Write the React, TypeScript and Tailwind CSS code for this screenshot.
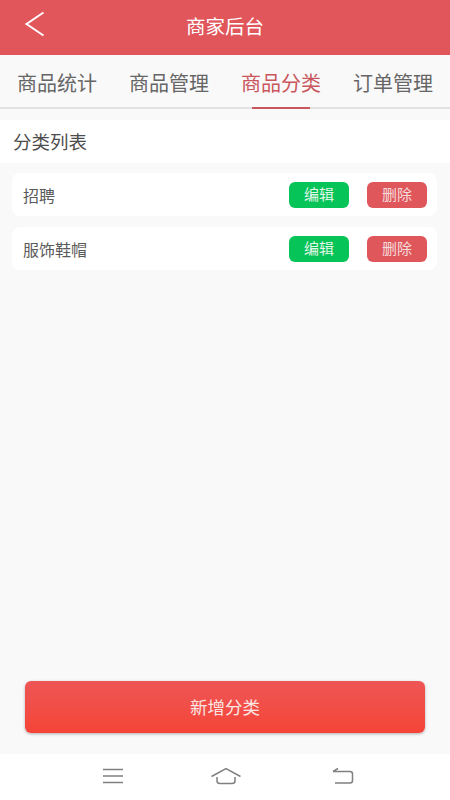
import React from 'react'

const font = { fontFamily: '"Noto Sans CJK SC", sans-serif' }

const tabs = [
	{ label: '商品统计', active: false },
	{ label: '商品管理', active: false },
	{ label: '商品分类', active: true },
	{ label: '订单管理', active: false }
]

const categories = ['招聘', '服饰鞋帽']

function CategoryRow({ name }: { name: string }) {
	return (
		<div className="flex h-[43px] items-center rounded-lg bg-white pl-[11px] pr-[10px]">
			<span className="flex-1 text-[16px] text-[#5a5a5a]">{name}</span>
			<button className="h-[26px] w-[60px] rounded-md bg-[#07c458] pb-[1px] text-[15px] text-[#e4f7ea]">编辑</button>
			<button className="ml-[18px] h-[26px] w-[60px] rounded-md bg-[#df575b] pb-[1px] text-[15px] text-[#f5dcdc]">删除</button>
		</div>
	)
}

export default function App() {
	return (
		<div className="flex h-[800px] w-[450px] flex-col overflow-hidden bg-[#f9f9f9]" style={font}>
			<header className="relative flex h-[55px] shrink-0 items-center justify-center bg-[#e0565b] pb-[3px]">
				<svg className="absolute left-[24px] top-[11px]" width="22" height="26" viewBox="0 0 22 26" fill="none">
					<path d="M19.5 1.5 L2.5 13 L19.5 24.5" stroke="#ffffff" strokeWidth="2" />
				</svg>
				<h1 className="text-[19.5px] text-white">商家后台</h1>
			</header>

			<nav className="flex h-[54px] shrink-0 border-b-2 border-[#e2e2e2] bg-[#f9f9f9] px-[1px]">
				{tabs.map(tab => (
					<div key={tab.label} className="relative flex flex-1 items-center justify-center pt-[3px]">
						<span className={`text-[20px] ${tab.active ? 'text-[#c9565b]' : 'text-[#666666]'}`}>{tab.label}</span>
						{tab.active && <div className="absolute bottom-[-2px] left-1/2 h-[2px] w-[58px] -translate-x-1/2 bg-[#c9565b]" />}
					</div>
				))}
			</nav>

			<div className="mt-[11px] flex h-[43px] shrink-0 items-center bg-white pl-[13px] text-[18.5px] text-[#4d4d4d]">分类列表</div>

			<div className="flex flex-col gap-[11px] pl-[12px] pr-[13px] pt-[10px]">
				{categories.map(name => (
					<CategoryRow key={name} name={name} />
				))}
			</div>

			<div className="mt-auto px-[25px] pb-[21px]">
				<button className="h-[52px] w-full rounded-md bg-gradient-to-b from-[#ed5655] to-[#f54436] text-[17.5px] text-[#fbe6e3] shadow-[0_1px_3px_rgba(0,0,0,0.3)]">
					新增分类
				</button>
			</div>

			<footer className="flex h-[46px] shrink-0 items-center justify-between bg-white pb-[2px] pl-[102px] pr-[95px]">
				<svg width="22" height="16" viewBox="0 0 22 16" fill="none" stroke="#808080" strokeWidth="1.6">
					<path d="M1 1.5 H21 M1 8 H21 M1 14.5 H21" />
				</svg>
				<svg className="mr-[3px]" width="30" height="18" viewBox="0 0 30 18" fill="none" stroke="#808080" strokeWidth="1.5">
					<path d="M0.5 9.5 L15 1.5 L29.5 9.5" />
					<path d="M6 10 V14 Q6 16.5 9 16.5 H21 Q24 16.5 24 14 V10" />
				</svg>
				<svg width="24" height="18" viewBox="0 0 24 18" fill="none" stroke="#808080" strokeWidth="1.5">
					<path d="M2 4.5 H19 Q21.5 4.5 21.5 7 V13.5 Q21.5 16 19 16 H4" />
					<path d="M2 4.5 L7 1.5" />
				</svg>
			</footer>
		</div>
	)
}
